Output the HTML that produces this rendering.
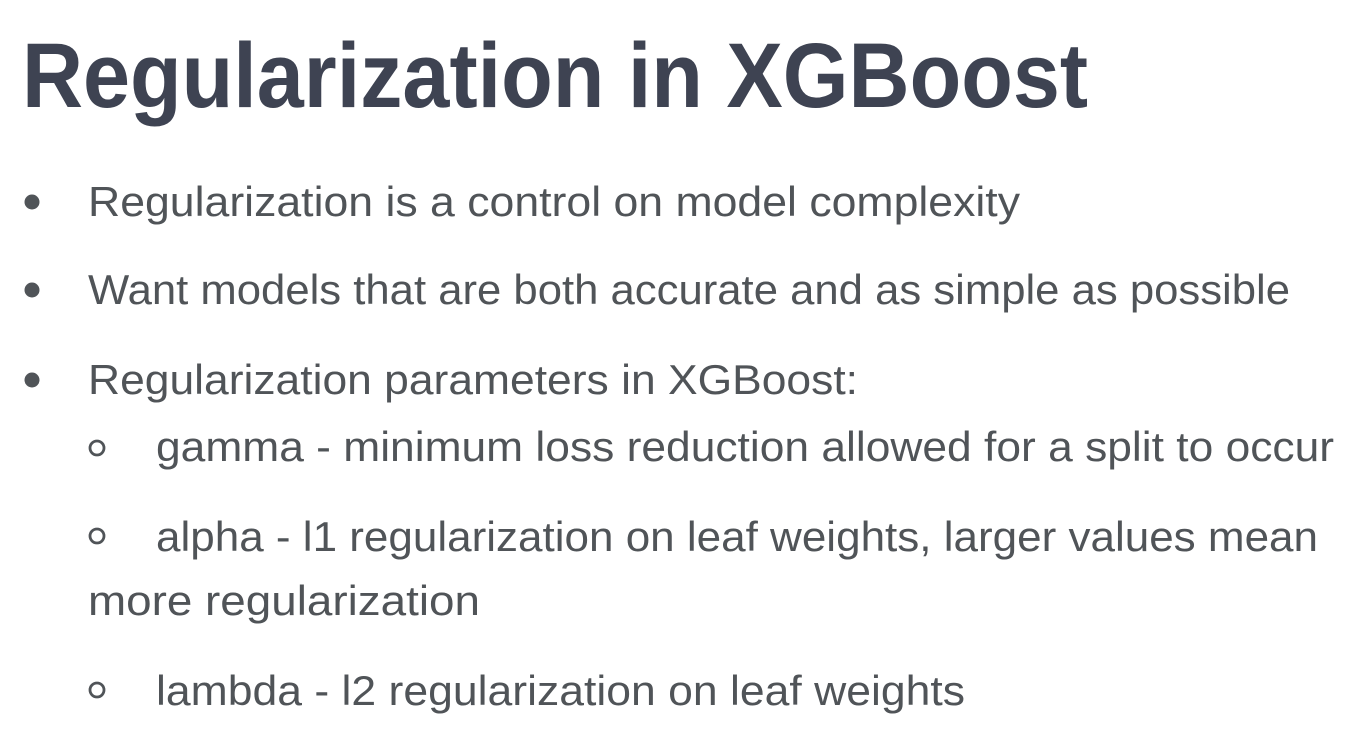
<!DOCTYPE html>
<html><head><meta charset="utf-8"><style>
html,body{margin:0;padding:0;background:#fff;width:1362px;height:744px;overflow:hidden}
svg{display:block}
.t{font-family:"Liberation Sans",sans-serif;font-weight:bold;fill:#3e4352}
.b{font-family:"Liberation Sans",sans-serif;fill:#505458;font-size:42px}
</style></head><body>
<svg width="1362" height="744" viewBox="0 0 1362 744">
<text class="t" x="22" y="107" font-size="92" textLength="1066" lengthAdjust="spacingAndGlyphs">Regularization in XGBoost</text>
<circle cx="32" cy="202" r="7.5" fill="#505458"/>
<text class="b" x="88" y="216" textLength="932" lengthAdjust="spacingAndGlyphs">Regularization is a control on model complexity</text>
<circle cx="32" cy="290" r="7.5" fill="#505458"/>
<text class="b" x="88" y="304" textLength="1202" lengthAdjust="spacingAndGlyphs">Want models that are both accurate and as simple as possible</text>
<circle cx="32" cy="380" r="7.5" fill="#505458"/>
<text class="b" x="88" y="394" textLength="770" lengthAdjust="spacingAndGlyphs">Regularization parameters in XGBoost:</text>
<circle cx="97" cy="448" r="7" fill="none" stroke="#505458" stroke-width="2.8"/>
<text class="b" x="156" y="461" textLength="1178" lengthAdjust="spacingAndGlyphs">gamma - minimum loss reduction allowed for a split to occur</text>
<circle cx="97" cy="536" r="7" fill="none" stroke="#505458" stroke-width="2.8"/>
<text class="b" x="156" y="551" textLength="1162" lengthAdjust="spacingAndGlyphs">alpha - l1 regularization on leaf weights, larger values mean</text>
<text class="b" x="88" y="615" textLength="392" lengthAdjust="spacingAndGlyphs">more regularization</text>
<circle cx="97" cy="690" r="7" fill="none" stroke="#505458" stroke-width="2.8"/>
<text class="b" x="156" y="705" textLength="809" lengthAdjust="spacingAndGlyphs">lambda - l2 regularization on leaf weights</text>
</svg>
</body></html>
